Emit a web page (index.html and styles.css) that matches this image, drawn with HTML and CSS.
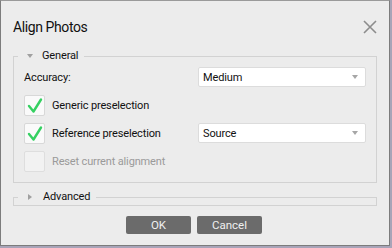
FILE: index.html
```html
<!DOCTYPE html>
<html>
<head>
<meta charset="utf-8">
<link rel="stylesheet" href="styles.css">
</head>
<body>
<div class="dialog">
  <div class="titlebar">
    <span class="title">Align Photos</span>
    <svg class="close" width="14" height="14" viewBox="0 0 14 14"><path d="M1 1 L13 13 M13 1 L1 13" stroke="#8c8c8c" stroke-width="1.6" fill="none"/></svg>
  </div>
  <fieldset class="group">
    <legend class="legend"><span class="tri-down"></span>General</legend>
    <div class="grid">
      <div class="label">Accuracy:</div>
      <div class="combo"><span>Medium</span><span class="arrow"></span></div>

      <div class="check-row"><span class="box"><svg width="21" height="21" viewBox="0 0 21 21"><path d="M5 11 L9.5 16.5 L17 4.5" stroke="#35d061" stroke-width="2.4" fill="none" stroke-linecap="round" stroke-linejoin="round"/></svg></span><span>Generic preselection</span></div>
      <div></div>

      <div class="check-row"><span class="box"><svg width="21" height="21" viewBox="0 0 21 21"><path d="M5 11 L9.5 16.5 L17 4.5" stroke="#35d061" stroke-width="2.4" fill="none" stroke-linecap="round" stroke-linejoin="round"/></svg></span><span>Reference preselection</span></div>
      <div class="combo"><span>Source</span><span class="arrow"></span></div>

      <div class="check-row disabled"><span class="box"></span><span>Reset current alignment</span></div>
      <div></div>
    </div>
  </fieldset>
  <fieldset class="group collapsed">
    <legend class="legend"><span class="tri-right"></span>Advanced</legend>
  </fieldset>
  <div class="buttons">
    <button class="btn">OK</button>
    <button class="btn">Cancel</button>
  </div>
</div>
</body>
</html>
```
FILE: styles.css
```css
html, body {
  margin: 0;
  padding: 0;
  background: #a8a4b8;
}
body {
  font-family: Roboto, "Open Sans", sans-serif;
  font-size: 11px;
  letter-spacing: -0.15px;
  color: #111;
}
.dialog {
  width: 390px;
  height: 246px;
  box-sizing: border-box;
  background: #ececec;
  border: 1px solid #7c7c7c;
  border-top-color: #9a9a9a;
  display: flex;
  flex-direction: column;
}
.titlebar {
  height: 47px;
  display: flex;
  align-items: center;
  justify-content: space-between;
  padding: 4px 12px 0 12px;
  box-sizing: border-box;
}
.title {
  font-size: 14px;
  letter-spacing: -0.4px;
  color: #111;
}
.close {
  display: block;
}
.group {
  margin: 0 12px;
  padding: 0 10px;
  border: 1px solid #d2d2d2;
  min-width: 0;
}
.legend {
  margin-left: -6px;
  padding: 0 6px 0 9px;
  height: 16px;
  line-height: 16px;
  display: flex;
  align-items: center;
}
.tri-down {
  width: 0;
  height: 0;
  border-left: 3.5px solid transparent;
  border-right: 3.5px solid transparent;
  border-top: 4px solid #a0a0a0;
  margin-right: 9px;
}
.tri-right {
  width: 0;
  height: 0;
  border-top: 3px solid transparent;
  border-bottom: 3px solid transparent;
  border-left: 4px solid #a0a0a0;
  margin: 0 11px 0 1px;
}
.collapsed .legend {
  margin-left: 4px;
}
.grid {
  display: grid;
  grid-template-columns: 1fr 168px;
  grid-auto-rows: 22px;
  row-gap: 6px;
  padding: 2px 0 10px 0;
  align-items: center;
}
.label {
  padding-top: 1px;
}
.combo {
  height: 20px;
  box-sizing: border-box;
  background: #fff;
  border: 1px solid #dcdcdc;
  border-radius: 2px;
  display: flex;
  align-items: center;
  justify-content: space-between;
  padding: 0 7px 0 4px;
}
.arrow {
  width: 0;
  height: 0;
  border-left: 3.5px solid transparent;
  border-right: 3.5px solid transparent;
  border-top: 4px solid #a6a6a6;
}
.check-row {
  display: flex;
  align-items: center;
  gap: 7px;
}
.box {
  width: 21px;
  height: 21px;
  box-sizing: border-box;
  background: #fafafa;
  border: 1px solid #d8d8d8;
  border-radius: 2px;
  display: flex;
  align-items: center;
  justify-content: center;
}
.box svg {
  display: block;
  margin: -1px;
}
.disabled {
  color: #9a9a9a;
}
.disabled .box {
  background: #f2f2f2;
  border-color: #dedede;
}
.collapsed {
  margin-top: 6px;
  padding: 0;
}
.buttons {
  display: flex;
  justify-content: center;
  gap: 6px;
  margin-top: 10px;
  padding-right: 2px;
}
.btn {
  width: 65px;
  height: 18px;
  border: none;
  border-radius: 2px;
  background: #6b6b6b;
  color: #f0f0f0;
  font-family: inherit;
  font-size: 11.5px;
  padding: 0;
}
```
